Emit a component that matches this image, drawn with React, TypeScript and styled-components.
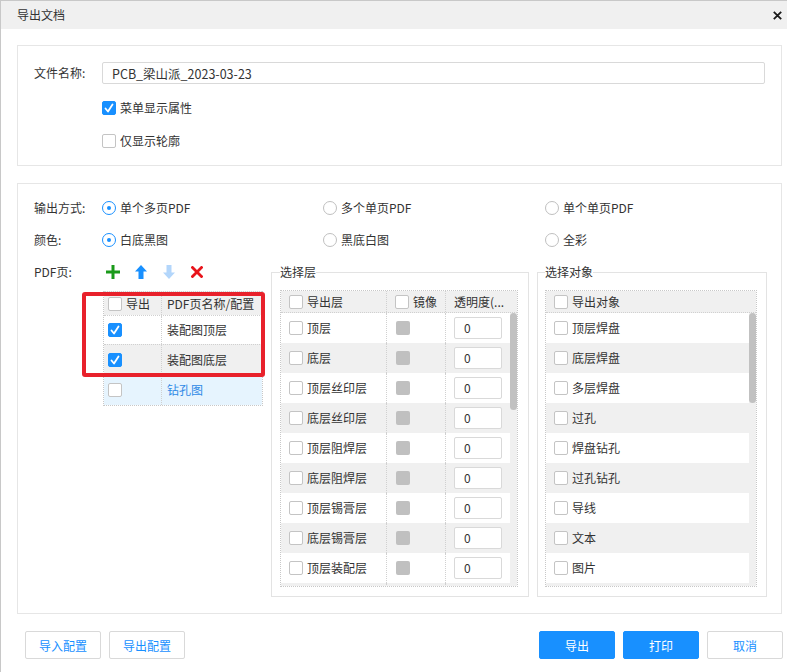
import React from "react";
import styled, { createGlobalStyle } from "styled-components";

const Global = createGlobalStyle`
  html, body { margin: 0; padding: 0; background: #fff; }
  body {
    font-family: "Noto Sans CJK SC", "Noto Sans", sans-serif;
    font-size: 12px;
    color: #333;
  }
  * { box-sizing: border-box; }
`;

const Dialog = styled.div`
  width: 787px;
  height: 672px;
  background: #fff;
  border-left: 1px solid #c8c8c8;
  border-top: 1px solid #c8c8c8;
  display: flex;
  flex-direction: column;
  overflow: hidden;
`;

const TitleBar = styled.div`
  height: 28px;
  flex: none;
  background: #f0f0f0;
  display: flex;
  align-items: center;
  justify-content: space-between;
  padding: 0 5px 0 16px;
`;

const Title = styled.span`
  font-size: 12px;
  color: #333;
  line-height: 16px;
`;

const Close = styled.span`
  width: 10px;
  height: 10px;
  display: flex;
  align-items: center;
  justify-content: center;
`;

const Body = styled.div`
  padding: 16px 5px 0 16px;
  display: flex;
  flex-direction: column;
`;

const Section = styled.div<{ $h: number; $mt?: number }>`
  height: ${(p) => p.$h}px;
  margin-top: ${(p) => p.$mt ?? 0}px;
  border: 1px solid #e6e6e6;
  background: #fff;
`;

const FileSection = styled(Section)`
  padding: 16px 16px 0 16px;
`;

const OutSection = styled(Section)`
  padding: 14px 14px 0 16px;
`;

const FieldRow = styled.div`
  display: flex;
  align-items: center;
  height: 22px;
`;

const FieldLabel = styled.span<{ $w: number }>`
  width: ${(p) => p.$w}px;
  flex: none;
  line-height: 16px;
`;

const TextInput = styled.div`
  flex: 1;
  height: 22px;
  border: 1px solid #d9d9d9;
  border-radius: 2px;
  padding-left: 9px;
  display: flex;
  align-items: center;
  font-size: 12.5px;
  color: #333;
`;

const CheckList = styled.div`
  margin-top: 14px;
  padding-left: 68px;
  display: flex;
  flex-direction: column;
  gap: 13px;
`;

const CheckItem = styled.label`
  display: flex;
  align-items: center;
  gap: 4px;
  height: 20px;
  line-height: 16px;
`;

const Box = styled.span<{ $on?: boolean }>`
  width: 14px;
  height: 14px;
  flex: none;
  border-radius: 2px;
  border: 1px solid ${(p) => (p.$on ? "#1890ff" : "#c4c4c4")};
  background: ${(p) => (p.$on ? "#1890ff" : "#fff")};
  display: inline-flex;
  align-items: center;
  justify-content: center;
`;

const Check = ({ on }: { on?: boolean }) => (
  <Box $on={on}>
    {on && (
      <svg width="12" height="12" viewBox="0 0 12 12">
        <polyline points="2.5,6.5 5,9.5 9.5,2.5" fill="none" stroke="#fff" strokeWidth="1.8" strokeLinecap="round" strokeLinejoin="round" />
      </svg>
    )}
  </Box>
);

const OptionRow = styled.div<{ $mt?: number }>`
  display: grid;
  grid-template-columns: 68px 221px 222px 1fr;
  align-items: center;
  height: 20px;
  margin-top: ${(p) => p.$mt ?? 0}px;
`;

const RadioItem = styled.label`
  display: flex;
  align-items: center;
  gap: 4px;
  line-height: 16px;
`;

const RadioCircle = styled.span<{ $on?: boolean }>`
  width: 14px;
  height: 14px;
  border-radius: 50%;
  border: 1px solid ${(p) => (p.$on ? "#1890ff" : "#bfbfbf")};
  background: #fff;
  display: inline-flex;
  align-items: center;
  justify-content: center;
  &::after {
    content: "";
    width: 4px;
    height: 4px;
    border-radius: 50%;
    background: ${(p) => (p.$on ? "#1890ff" : "transparent")};
  }
`;

const Radio = ({ on, children }: { on?: boolean; children: React.ReactNode }) => (
  <RadioItem>
    <RadioCircle $on={on} />
    <span>{children}</span>
  </RadioItem>
);

const Area = styled.div`
  display: flex;
  align-items: flex-start;
  margin-top: 12px;
`;

const LeftCol = styled.div`
  width: 237px;
  flex: none;
  display: flex;
  flex-direction: column;
`;

const Toolbar = styled.div`
  display: flex;
  align-items: center;
  height: 20px;
`;

const ToolSlot = styled.span`
  width: 28px;
  height: 20px;
  display: inline-flex;
  align-items: center;
  justify-content: center;
`;

const PageTableWrap = styled.div`
  position: relative;
  margin: 9px 0 0 69px;
  width: 160px;
`;

const PageTable = styled.div`
  border: 1px dotted #c8c8c8;
  border-top: none;
`;

const PageRow = styled.div<{ $bg: string; $h: number }>`
  display: grid;
  grid-template-columns: 58px 1fr;
  height: ${(p) => p.$h}px;
  background: ${(p) => p.$bg};
  border-top: 1px dotted #d0d0d0;
`;

const Cell = styled.div<{ $pl?: number; $color?: string; $last?: boolean }>`
  display: flex;
  align-items: center;
  gap: 4px;
  padding-left: ${(p) => p.$pl ?? 8}px;
  border-right: ${(p) => (p.$last ? "none" : "1px dotted #d0d0d0")};
  color: ${(p) => p.$color ?? "#333"};
  white-space: nowrap;
  overflow: hidden;
  line-height: 16px;
  min-width: 0;
`;

const Highlight = styled.div`
  position: absolute;
  left: -21px;
  top: 1px;
  width: 183px;
  height: 85px;
  border: 4px solid #e8212b;
  border-radius: 3px;
  pointer-events: none;
`;

const Fieldset = styled.fieldset<{ $w: number; $pl: number; $pr: number }>`
  width: ${(p) => p.$w}px;
  flex: none;
  margin: 2px 0 0 0;
  border: 1px solid #e3e3e3;
  padding: 0 ${(p) => p.$pr}px 9px ${(p) => p.$pl}px;
  min-width: 0;
  & + & {
    margin-left: 8px;
  }
`;

const Legend = styled.legend`
  padding: 0;
  font-size: 12px;
  line-height: 16px;
  color: #333;
`;

const Grid = styled.div`
  margin-top: 10px;
  border: 1px dotted #c8c8c8;
`;

const HeadRow = styled.div<{ $cols: string }>`
  display: grid;
  grid-template-columns: ${(p) => p.$cols};
  height: 22px;
  background: #f0f0f0;
  border-bottom: 1px dotted #d0d0d0;
`;

const ScrollBody = styled.div`
  display: flex;
  height: 273px;
  overflow: hidden;
`;

const Rows = styled.div`
  flex: 1;
  min-width: 0;
  overflow: hidden;
  display: flex;
  flex-direction: column;
`;

const DataRow = styled.div<{ $cols: string }>`
  flex: none;
  display: grid;
  grid-template-columns: ${(p) => p.$cols};
  height: 30px;
  background: #fff;
  &:nth-child(even) {
    background: #f0f0f0;
  }
`;

const Track = styled.div`
  width: 7px;
  flex: none;
  background: #f0f0f0;
`;

const Thumb = styled.div<{ $h: number }>`
  width: 7px;
  height: ${(p) => p.$h}px;
  border-radius: 4px;
  background: #c1c1c1;
`;

const Mirror = styled.span`
  width: 14px;
  height: 14px;
  border-radius: 2px;
  background: #c0c0c0;
`;

const Opacity = styled.span`
  width: 48px;
  height: 22px;
  border: 1px solid #d9d9d9;
  border-radius: 2px;
  background: #fff;
  padding-left: 9px;
  display: flex;
  align-items: center;
  color: #333;
`;

const Footer = styled.div`
  display: flex;
  align-items: center;
  gap: 8px;
  padding: 17px 4px 0 24px;
`;

const Spacer = styled.div`
  flex: 1;
`;

const Button = styled.button<{ $primary?: boolean }>`
  width: 76px;
  height: 28px;
  border-radius: 2px;
  font-family: inherit;
  font-size: 12px;
  cursor: pointer;
  border: 1px solid ${(p) => (p.$primary ? "#1890ff" : "#d9d9d9")};
  background: ${(p) => (p.$primary ? "#1890ff" : "#fff")};
  color: ${(p) => (p.$primary ? "#fff" : "#1890ff")};
`;

const PlusIcon = () => (
  <svg width="14" height="14" viewBox="0 0 14 14">
    <rect x="0" y="5.5" width="14" height="3" fill="#1a9a1a" />
    <rect x="5.5" y="0" width="3" height="14" fill="#1a9a1a" />
  </svg>
);

const ArrowIcon = ({ down, color }: { down?: boolean; color: string }) => (
  <svg width="12" height="14" viewBox="0 0 12 14" style={down ? { transform: "rotate(180deg)" } : undefined}>
    <path d="M6 0 L12 6.5 H8.5 V14 H3.5 V6.5 H0 Z" fill={color} />
  </svg>
);

const DelIcon = () => (
  <svg width="12" height="12" viewBox="0 0 12 12">
    <path d="M1.5 1.5 L10.5 10.5 M10.5 1.5 L1.5 10.5" stroke="#e8141b" strokeWidth="2.8" strokeLinecap="square" />
  </svg>
);

const layers = [
  "顶层",
  "底层",
  "顶层丝印层",
  "底层丝印层",
  "顶层阻焊层",
  "底层阻焊层",
  "顶层锡膏层",
  "底层锡膏层",
  "顶层装配层",
];

const objects = ["顶层焊盘", "底层焊盘", "多层焊盘", "过孔", "焊盘钻孔", "过孔钻孔", "导线", "文本", "图片"];

const LAYER_COLS = "106px 59px 1fr";

export default function App() {
  return (
    <>
      <Global />
      <Dialog>
        <TitleBar>
          <Title>导出文档</Title>
          <Close>
            <svg width="9" height="9" viewBox="0 0 9 9">
              <path d="M0.8 0.8 L8.2 8.2 M8.2 0.8 L0.8 8.2" stroke="#1a1a1a" strokeWidth="1.8" />
            </svg>
          </Close>
        </TitleBar>
        <Body>
          <FileSection $h={121}>
            <FieldRow>
              <FieldLabel $w={68}>文件名称:</FieldLabel>
              <TextInput>PCB_梁山派_2023-03-23</TextInput>
            </FieldRow>
            <CheckList>
              <CheckItem>
                <Check on />
                <span>菜单显示属性</span>
              </CheckItem>
              <CheckItem>
                <Check />
                <span>仅显示轮廓</span>
              </CheckItem>
            </CheckList>
          </FileSection>

          <OutSection $h={431} $mt={17}>
            <OptionRow>
              <FieldLabel $w={68}>输出方式:</FieldLabel>
              <Radio on>单个多页PDF</Radio>
              <Radio>多个单页PDF</Radio>
              <Radio>单个单页PDF</Radio>
            </OptionRow>
            <OptionRow $mt={12}>
              <FieldLabel $w={68}>颜色:</FieldLabel>
              <Radio on>白底黑图</Radio>
              <Radio>黑底白图</Radio>
              <Radio>全彩</Radio>
            </OptionRow>
            <Area>
              <LeftCol>
                <Toolbar>
                  <FieldLabel $w={65}>PDF页:</FieldLabel>
                  <ToolSlot><PlusIcon /></ToolSlot>
                  <ToolSlot><ArrowIcon color="#1890ff" /></ToolSlot>
                  <ToolSlot><ArrowIcon down color="#b3d6fb" /></ToolSlot>
                  <ToolSlot><DelIcon /></ToolSlot>
                </Toolbar>
                <PageTableWrap>
                  <PageTable>
                    <PageRow $bg="#f0f0f0" $h={24}>
                      <Cell $pl={4}>
                        <Check />
                        <span>导出</span>
                      </Cell>
                      <Cell $pl={5} $last>PDF页名称/配置</Cell>
                    </PageRow>
                    <PageRow $bg="#fff" $h={29}>
                      <Cell $pl={4}><Check on /></Cell>
                      <Cell $pl={5} $last>装配图顶层</Cell>
                    </PageRow>
                    <PageRow $bg="#f0f0f0" $h={30}>
                      <Cell $pl={4}><Check on /></Cell>
                      <Cell $pl={5} $last>装配图底层</Cell>
                    </PageRow>
                    <PageRow $bg="#e6f4fe" $h={31}>
                      <Cell $pl={4}><Check /></Cell>
                      <Cell $pl={5} $last $color="#2f8ae6">钻孔图</Cell>
                    </PageRow>
                  </PageTable>
                  <Highlight />
                </PageTableWrap>
              </LeftCol>

              <Fieldset $w={258} $pl={8} $pr={10}>
                <Legend>选择层</Legend>
                <Grid>
                  <HeadRow $cols={LAYER_COLS}>
                    <Cell>
                      <Check />
                      <span>导出层</span>
                    </Cell>
                    <Cell>
                      <Check />
                      <span>镜像</span>
                    </Cell>
                    <Cell $last>透明度(...</Cell>
                  </HeadRow>
                  <ScrollBody>
                    <Rows>
                      {layers.map((l) => (
                        <DataRow key={l} $cols={LAYER_COLS}>
                          <Cell>
                            <Check />
                            <span>{l}</span>
                          </Cell>
                          <Cell $pl={9}>
                            <Mirror />
                          </Cell>
                          <Cell $pl={8} $last>
                            <Opacity>0</Opacity>
                          </Cell>
                        </DataRow>
                      ))}
                      <DataRow $cols={LAYER_COLS}>
                        <Cell />
                        <Cell />
                        <Cell $pl={8} $last>
                          <Opacity />
                        </Cell>
                      </DataRow>
                    </Rows>
                    <Track>
                      <Thumb $h={97} />
                    </Track>
                  </ScrollBody>
                </Grid>
              </Fieldset>

              <Fieldset $w={230} $pl={7} $pr={9}>
                <Legend>选择对象</Legend>
                <Grid>
                  <HeadRow $cols="1fr">
                    <Cell $last>
                      <Check />
                      <span>导出对象</span>
                    </Cell>
                  </HeadRow>
                  <ScrollBody>
                    <Rows>
                      {objects.map((o) => (
                        <DataRow key={o} $cols="1fr">
                          <Cell $last>
                            <Check />
                            <span>{o}</span>
                          </Cell>
                        </DataRow>
                      ))}
                      <DataRow $cols="1fr">
                        <Cell $last />
                      </DataRow>
                    </Rows>
                    <Track>
                      <Thumb $h={90} />
                    </Track>
                  </ScrollBody>
                </Grid>
              </Fieldset>
            </Area>
          </OutSection>
        </Body>
        <Footer>
          <Button>导入配置</Button>
          <Button>导出配置</Button>
          <Spacer />
          <Button $primary>导出</Button>
          <Button $primary>打印</Button>
          <Button>取消</Button>
        </Footer>
      </Dialog>
    </>
  );
}
